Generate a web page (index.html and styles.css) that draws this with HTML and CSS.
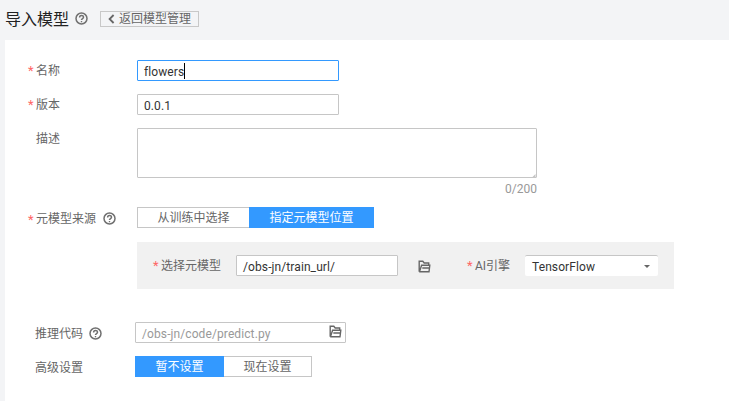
FILE: index.html
```html
<!DOCTYPE html>
<html lang="zh-CN">
<head>
<meta charset="utf-8">
<title>导入模型</title>
<link rel="stylesheet" href="styles.css">
</head>
<body>
<svg width="0" height="0" class="symbols">
  <symbol id="help" viewBox="0 0 14 14">
    <circle cx="6.5" cy="6.5" r="5.5" fill="none" stroke="currentColor" stroke-width="1.5"/>
    <path d="M4.6 5.4C4.6 3 8.5 3 8.5 5.2C8.5 6.6 6.5 6.5 6.5 8.1" fill="none" stroke="currentColor" stroke-width="1.5"/>
    <path d="M5.8 9h1.4v1.3H5.8z" fill="currentColor"/>
  </symbol>
  <symbol id="folder" viewBox="0 0 13 13">
    <path d="M1.2 11.8V1.2H4.8L6.2 3H10.7V5M1.2 11.8H11L11.8 5.3H3.6L1.6 11.4M4.3 8H11.4" fill="none" stroke="currentColor" stroke-width="1.4"/>
  </symbol>
</svg>
<header class="header">
  <h1 class="title">导入模型</h1>
  <svg class="help"><use href="#help"/></svg>
  <button class="back"><svg class="chevron" viewBox="0 0 7 10"><path d="M5.6 1L1.6 5l4 4" fill="none" stroke="currentColor" stroke-width="1.8"/></svg>返回模型管理</button>
</header>
<main class="panel">
  <div class="row">
    <div class="label"><span class="star">*</span>名称</div>
    <div class="input focused">flowers<span class="caret"></span></div>
  </div>
  <div class="row">
    <div class="label"><span class="star">*</span>版本</div>
    <div class="input">0.0.1</div>
  </div>
  <div class="row description">
    <div class="label"><span class="star"></span>描述</div>
    <div class="area">
      <div class="textarea"><svg class="grip" viewBox="0 0 5 5"><path d="M5 0v5H0z" fill="#c4c4c4"/></svg></div>
      <div class="count">0/200</div>
    </div>
  </div>
  <div class="row source">
    <div class="label"><span class="star">*</span>元模型来源<svg class="help"><use href="#help"/></svg></div>
    <div class="segments"><button class="segment first">从训练中选择</button><button class="segment active second">指定元模型位置</button></div>
  </div>
  <div class="location">
    <div class="label"><span class="star">*</span>选择元模型</div>
    <div class="input path">/obs-jn/train_url/</div>
    <svg class="folder"><use href="#folder"/></svg>
    <div class="label engine"><span class="star">*</span>AI引擎</div>
    <div class="select">TensorFlow<i class="arrow"></i></div>
  </div>
  <div class="row lower">
    <div class="label"><span class="star"></span>推理代码<svg class="help"><use href="#help"/></svg></div>
    <div class="input code">/obs-jn/code/predict.py<svg class="folder"><use href="#folder"/></svg></div>
  </div>
  <div class="row lower">
    <div class="label"><span class="star"></span>高级设置</div>
    <div class="segments"><button class="segment active unset">暂不设置</button><button class="segment now">现在设置</button></div>
  </div>
</main>
</body>
</html>
```
FILE: styles.css
```css
* { box-sizing: border-box; }
body {
  margin: 0;
  height: 401px;
  display: flex;
  flex-direction: column;
  overflow: hidden;
  background: #f3f4f6;
  color: #666;
  font: 12px/20px Roboto, "Noto Sans CJK SC", sans-serif;
}
button { font: inherit; color: inherit; padding: 0; margin: 0; background: #fff; }
.symbols { position: absolute; }
.header { height: 40px; flex: none; display: flex; align-items: center; padding: 0 0 3px 5px; }
.title { margin: 2px 0 0; width: 70px; font-size: 16px; font-weight: 400; line-height: 20px; color: #222; white-space: nowrap; }
.help { width: 14px; height: 14px; flex: none; color: #707070; }
.back {
  display: flex; align-items: center; justify-content: center; gap: 4px;
  width: 99px; height: 16px; margin-left: 11px;
  border: 1px solid #c8c8c8; background: #f3f4f6; line-height: 14px; white-space: nowrap;
}
.chevron { width: 7px; height: 10px; }
.panel {
  flex: 1; margin-left: 5px; padding: 20px 0 0 22px; background: #fff;
  display: flex; flex-direction: column; gap: 13px;
}
.row { display: flex; height: 21px; flex: none; }
.label { width: 110px; flex: none; display: flex; align-items: center; height: 21px; white-space: nowrap; }
.label .help { margin-left: 7px; }
.star { width: 9px; flex: none; padding: 1px 0 0 1px; color: #f66; font-size: 13px; line-height: 16px; }
.input {
  display: flex; align-items: center; width: 202px; height: 21px; padding: 2px 0 0 6px;
  border: 1px solid #c6c6c6; border-radius: 1px; background: #fff; color: #333; white-space: nowrap;
  letter-spacing: 0.1px;
}
.focused { border-color: #39f; }
.caret { width: 1px; height: 16px; margin-top: -1px; background: #000; }
.description { height: 66px; }
.area { width: 400px; }
.textarea {
  display: flex; align-items: flex-end; justify-content: flex-end;
  height: 50px; border: 1px solid #c6c6c6; border-radius: 1px;
}
.grip { width: 4px; height: 3px; }
.count { text-align: right; line-height: 22px; color: #999; }
.segments { display: flex; }
.segment { height: 21px; padding-top: 2px; border: 1px solid #c6c6c6; line-height: 17px; }
.segment.active { border-color: #39f; background: #39f; color: #fff; }
.first { width: 112px; border-right: 0; }
.second { width: 125px; }
.unset { width: 89px; }
.now { width: 88px; border-left: 0; }
.source .label { padding-top: 3px; }
.location {
  display: flex; align-items: center; width: 537px; height: 47px; flex: none;
  margin: 1px 0 20px 110px; padding-left: 15px; background: #f1f1f1;
}
.location .label { width: 84px; }
.path { width: 162px; }
.folder { width: 13px; height: 13px; color: #666; flex: none; }
.location .folder { margin: 2px 0 0 20px; }
.location .engine { width: 59px; margin-left: 35px; }
.select {
  display: flex; align-items: center; justify-content: space-between;
  width: 133px; height: 21px; padding: 1px 8px 0 7px;
  border-top: 1px solid #c6c6c6; border-radius: 2px; background: #fff; color: #333;
  letter-spacing: 0.1px;
}
.arrow { border: 3px solid transparent; border-top-color: #666; border-bottom: 0; }
.lower { margin-left: -1px; }
.lower .label { width: 109px; padding-top: 3px; }
.lower .help { margin: -1px 0 0 6px; }
.code { width: 211px; justify-content: space-between; padding-right: 3px; color: #999; }
.code .folder { margin-top: -4px; }
```
